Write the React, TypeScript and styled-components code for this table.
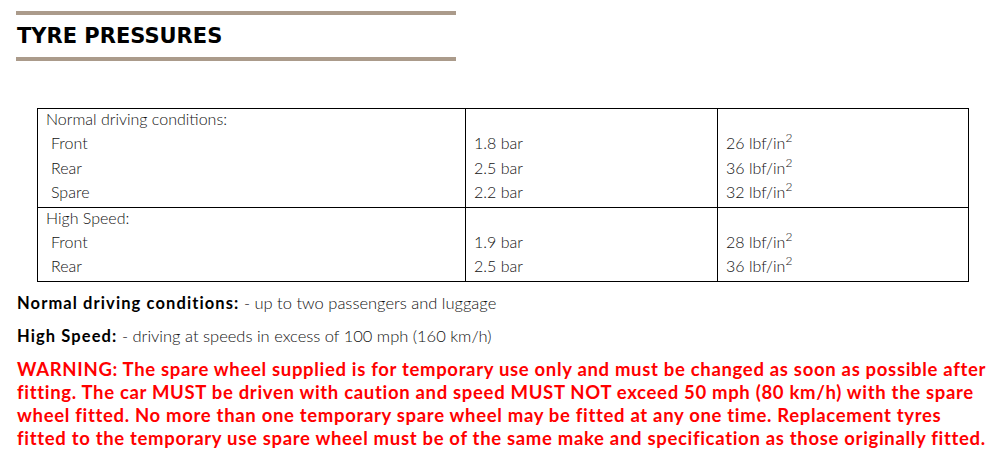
import styled, { createGlobalStyle } from "styled-components";

const GlobalStyle = createGlobalStyle`
  body {
    margin: 0;
    background: #ffffff;
    font-family: "Lato", "Open Sans", sans-serif;
    color: #222222;
  }
`;

const Page = styled.div`
  width: 999px;
  height: 462px;
  padding: 11px 0 0 16px;
  box-sizing: border-box;
  overflow: hidden;
`;

// --------------------- HEADER ---------------------------------

const Header = styled.div`
  width: 439px;
  height: 32px;
  border-top: 4px solid #ab9b8b;
  border-bottom: 4px solid #ab9b8b;
  padding: 10px 0 0 1px;
  box-sizing: content-box;
`;

const Title = styled.h1`
  margin: 0;
  font-family: "DejaVu Sans", sans-serif;
  font-size: 21px;
  line-height: 23px;
  font-weight: bold;
  color: #000000;
`;

// --------------------- TABLE ---------------------------------

const Table = styled.table`
  margin: 47px 0 0 21px;
  width: 932px;
  border-collapse: collapse;
  font-family: "Lato", sans-serif;
  font-weight: 300;
  font-size: 16px;
  color: #111111;

  td {
    border: 1px solid #000000;
    vertical-align: top;
    padding: 0 0 1px 8px;
  }
`;

const Line = styled.div<{ $indent?: boolean }>`
  height: 24.6px;
  line-height: 22px;
  padding-left: ${({ $indent }) => ($indent ? "5px" : "0")};
  white-space: nowrap;
`;

const GroupLabel = styled(Line)`
  height: 19px;
  line-height: 19px;
  margin-bottom: 4px;
`;

const Sup = styled.sup`
  font-size: 12px;
  line-height: 0;
  vertical-align: 7px;
`;

// --------------------- NOTES ---------------------------------

const Notes = styled.div`
  margin-top: 10px;
  padding-left: 1px;
  font-family: "Lato", sans-serif;
  font-size: 16.5px;
  color: #111111;
`;

const Note = styled.p`
  margin: 0 0 11px;
  line-height: 22px;
  font-weight: 300;

  strong {
    font-weight: bold;
    letter-spacing: 1.1px;
    color: #000000;
  }
`;

const Warning = styled.p`
  margin: 0;
  color: #ff0000;
  font-family: "Lato", sans-serif;
  font-weight: bold;
  font-size: 18.5px;
  line-height: 23px;
  letter-spacing: 0.68px;
  white-space: nowrap;
`;

type Group = {
  label: string;
  rows: [string, string, string][];
};

const groups: Group[] = [
  {
    label: "Normal driving conditions:",
    rows: [
      ["Front", "1.8 bar", "26"],
      ["Rear", "2.5 bar", "36"],
      ["Spare", "2.2 bar", "32"],
    ],
  },
  {
    label: "High Speed:",
    rows: [
      ["Front", "1.9 bar", "28"],
      ["Rear", "2.5 bar", "36"],
    ],
  },
];

export default function App() {
  return (
    <Page>
      <GlobalStyle />
      <Header>
        <Title>TYRE PRESSURES</Title>
      </Header>

      <Table>
        <colgroup>
          <col style={{ width: 428 }} />
          <col style={{ width: 252 }} />
          <col />
        </colgroup>
        <tbody>
          {groups.map((g) => (
            <tr key={g.label}>
              <td>
                <GroupLabel>{g.label}</GroupLabel>
                {g.rows.map((r) => (
                  <Line $indent key={r[0]}>
                    {r[0]}
                  </Line>
                ))}
              </td>
              <td>
                <GroupLabel />
                {g.rows.map((r) => (
                  <Line key={r[0]}>{r[1]}</Line>
                ))}
              </td>
              <td>
                <GroupLabel />
                {g.rows.map((r) => (
                  <Line key={r[0]}>
                    {r[2]} lbf/in<Sup>2</Sup>
                  </Line>
                ))}
              </td>
            </tr>
          ))}
        </tbody>
      </Table>

      <Notes>
        <Note>
          <strong>Normal driving conditions:</strong> - up to two passengers and luggage
        </Note>
        <Note>
          <strong>High Speed:</strong> - driving at speeds in excess of 100 mph (160 km/h)
        </Note>
        <Warning>
          WARNING: The spare wheel supplied is for temporary use only and must be changed as soon as possible after
          <br />
          fitting. The car MUST be driven with caution and speed MUST NOT exceed 50 mph (80 km/h) with the spare
          <br />
          wheel fitted. No more than one temporary spare wheel may be fitted at any one time. Replacement tyres
          <br />
          fitted to the temporary use spare wheel must be of the same make and specification as those originally fitted.
        </Warning>
      </Notes>
    </Page>
  );
}
